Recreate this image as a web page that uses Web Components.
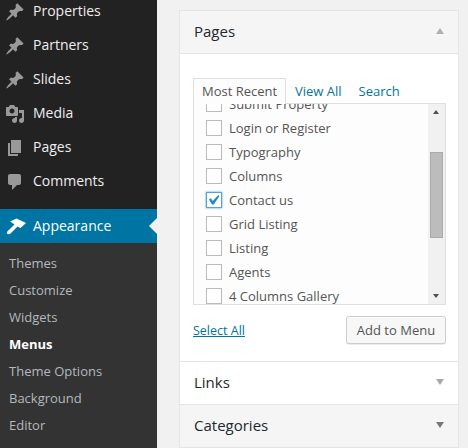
<!DOCTYPE html>
<html><head><meta charset="utf-8"><style>
html,body{margin:0;padding:0;background:#f1f1f1;width:468px;height:448px;overflow:hidden;font-family:"Open Sans",sans-serif}
#root{display:flex;width:468px;height:448px;overflow:hidden}
</style></head><body>
<div id="root">
<wp-sidebar>
 <wp-item icon="pin">Properties</wp-item>
 <wp-item icon="pin">Partners</wp-item>
 <wp-item icon="pin">Slides</wp-item>
 <wp-item icon="media">Media</wp-item>
 <wp-item icon="pages">Pages</wp-item>
 <wp-item icon="comment">Comments</wp-item>
 <wp-item icon="brush" active>Appearance</wp-item>
 <wp-submenu>
 <wp-sub>Themes</wp-sub><wp-sub>Customize</wp-sub><wp-sub>Widgets</wp-sub><wp-sub current>Menus</wp-sub><wp-sub>Theme Options</wp-sub><wp-sub>Background</wp-sub><wp-sub>Editor</wp-sub>
 </wp-submenu>
</wp-sidebar>
<wp-accordion>
 <wp-section title="Pages" open shaded></wp-section>
 <wp-section title="Links"></wp-section>
 <wp-section title="Categories" shaded></wp-section>
</wp-accordion>
</div>
<script>
const ICONS={
pin:'<path fill="currentColor" d="M10.440 3.020l1.820-1.820 6.360 6.350-1.830 1.820c-1.050-.68-2.480-.57-3.410.36l-.75.75c-.92.93-1.040 2.350-.35 3.410l-1.830 1.820-2.410-2.410-2.800 2.790c-.42.42-3.380 2.710-3.800 2.290s1.860-3.390 2.280-3.810l2.790-2.790L4.100 9.360l1.830-1.820c1.050.69 2.480.57 3.400-.36l.75-.75c.93-.92 1.050-2.350.36-3.410z"/>',
media:'<path fill="currentColor" d="M13 11V4c0-.55-.45-1-1-1h-1.670L9 1H5L3.670 3H2c-.55 0-1 .45-1 1v7c0 .55.45 1 1 1h10c.55 0 1-.45 1-1zM7 4.500c1.380 0 2.500 1.120 2.500 2.500S8.380 9.500 7 9.500 4.500 8.380 4.500 7 5.620 4.500 7 4.500zM14 6h5v10.500c0 1.380-1.120 2.500-2.500 2.500S14 17.880 14 16.500s1.120-2.500 2.500-2.500c.17 0 .34.02.5.05V9h-3V6zm-4 8.050V13h2v3.500c0 1.380-1.120 2.500-2.500 2.500S7 17.880 7 16.500 8.120 14 9.500 14c.17 0 .34.02.5.05z"/>',
pages:'<path fill="currentColor" d="M6 15V2h10v13H6zm-1 1h8v2H3V5h2v11z"/>',
comment:'<path fill="currentColor" d="M5 2h9c1.100 0 2 .9 2 2v7c0 1.100-.9 2-2 2h-2l-5 5v-5H5c-1.100 0-2-.9-2-2V4c0-1.100.9-2 2-2z"/>',
brush:'<path fill="currentColor" d="M5 3.500L11.500.5 21 5l-5.500 5-3-1.500-7 7c-1 1-2.500 1-3.200.3-.7-.8-.5-2 .5-2.800l6.700-6.500z"/>'
};
function def(name,css,html){
 customElements.define(name,class extends HTMLElement{
  connectedCallback(){ if(this.shadowRoot)return;
   const r=this.attachShadow({mode:'open'});
   r.innerHTML='<style>'+css+'</style>'+(typeof html==='function'?html(this):html);
  }
 });
}
def('wp-sidebar',':host{display:block;width:157px;height:448px;flex:none;background:#222;overflow:hidden}.in{margin-top:-7px}','<div class="in"><slot></slot></div>');
def('wp-item',`:host{display:flex;align-items:center;height:34px;color:#eee;font-size:14px;position:relative}
:host([active]){background:#0074a2;color:#fff;margin-top:12px}
.i{width:20px;height:20px;margin:4px 8px 0 5px;color:#999;flex:none;display:block;overflow:visible}
:host([active]) .i{color:#fff}
.a{position:absolute;right:0;top:50%;margin-top:-8px;border:8px solid transparent;border-right-color:#f1f1f1;border-left-width:0}
:host([active]) span{margin-top:-1px}
`,h=>`<svg class="i" viewBox="0 0 20 20">${ICONS[h.getAttribute('icon')]}</svg><span><slot></slot></span>${h.hasAttribute('active')?'<i class="a"></i>':''}`);
def('wp-submenu',':host{display:block;background:#333;padding:6px 0 30px}','<slot></slot>');
def('wp-sub',`:host{display:flex;align-items:center;height:27px;color:#b4b9be;font-size:13px;padding-left:9px}
:host([current]){color:#fff;font-weight:700}`,'<slot></slot>');
def('wp-accordion',':host{display:block;width:280px;margin:10px 0 0 22px;flex:none;border:1px solid #e5e5e5;border-width:1px 1px 0;box-sizing:border-box;background:#fff;color:#23282d;align-self:flex-start}','<slot></slot>');
const PAGES=['Submit Property','Login or Register','Typography','Columns','Contact us','Grid Listing','Listing','Agents','4 Columns Gallery'];
def('wp-check',`:host{display:flex;align-items:center;height:24px;font-size:13px;color:#555;white-space:nowrap}
.b{width:16px;height:16px;box-sizing:border-box;border:1px solid #bbb;background:#fff;margin-right:7px;flex:none;display:block}
:host([checked]) .b{border-color:#5b9dd9;box-shadow:0 0 2px rgba(30,140,190,.8)}
svg{display:block;width:14px;height:14px}
`,h=>`<span class="b">${h.hasAttribute('checked')?'<svg viewBox="0 0 14 14"><path fill="#1e8cbe" d="M2 6.500l1.800-1.300L5.800 8 11.300 2l1 1.200-5.500 8.300H5z"/></svg>':''}</span><slot></slot>`);
def('wp-section',`:host{display:block;border-bottom:1px solid #e5e5e5}
.h{height:42px;box-sizing:border-box;padding:0 14px 2px;display:flex;align-items:center;justify-content:space-between;font-size:15px;color:#23282d}
:host([shaded]) .h{background:#f5f5f5}
.t{width:0;height:0;border:4px solid transparent}
.up{border-bottom:6px solid #b0b0b0;border-top-width:0}
.dn{border-top:6px solid #a8a8a8;border-bottom-width:0}
:host([shaded]) .dn{border-top-color:#777}
.c{border-top:1px solid #e5e5e5;padding:24px 13px 0;height:308px;box-sizing:border-box;background:#fff}
.tabs{display:flex;font-size:13px;height:26px;position:relative;z-index:1;white-space:nowrap}
.tab{margin-left:9px;margin-right:9px;height:26px;line-height:26px;color:#0074a2;box-sizing:border-box}
.tab:last-child{margin-left:8px}
.tab.on{color:#555;background:#fdfdfd;border:1px solid #dfdfdf;border-bottom:0;margin:0;padding:0 0 0 8px;line-height:25px;width:93px;height:26px}
.box{height:202px;width:253px;box-sizing:border-box;border:1px solid #dfdfdf;background:#fdfdfd;margin-top:-1px;display:flex;overflow:hidden}
.list{flex:1;padding-left:12px;margin-top:-12px;overflow:hidden}
.sb{width:17px;background:#f1f1f1;position:relative;flex:none}
.thumb{position:absolute;left:2px;top:48px;height:86px;background:#bcbcbc;border:1px solid #ababab;box-sizing:border-box;width:13px}
.ar{position:absolute;left:5px;width:0;height:0;border:3.500px solid transparent}
.ar.u{top:6px;border-bottom:4px solid #505050;border-top-width:0}
.ar.d{bottom:6px;border-top:4px solid #505050;border-bottom-width:0}
.f{display:flex;justify-content:space-between;align-items:center;margin-top:11px;width:253px}
a{color:#0074a2;text-decoration:underline;font-size:12.500px}
button{font:13px "Open Sans",sans-serif;color:#555;background:#f7f7f7;border:1px solid #ccc;border-radius:3px;width:100px;height:28px;padding:0;box-shadow:inset 0 1px 0 #fff,0 1px 0 rgba(0,0,0,.08)}
`,h=>{const o=h.hasAttribute('open');return `<div class="h"><span>${h.getAttribute('title')}</span><i class="t ${o?'up':'dn'}"></i></div>`+(o?`<div class="c"><div class="tabs"><span class="tab on">Most Recent</span><span class="tab">View All</span><span class="tab">Search</span></div><div class="box"><div class="list">${PAGES.map(p=>`<wp-check${p==='Contact us'?' checked':''}>${p}</wp-check>`).join('')}</div><div class="sb"><i class="ar u"></i><i class="thumb"></i><i class="ar d"></i></div></div><div class="f"><a>Select All</a><button>Add to Menu</button></div></div>`:'');});
</script>
</body></html>
